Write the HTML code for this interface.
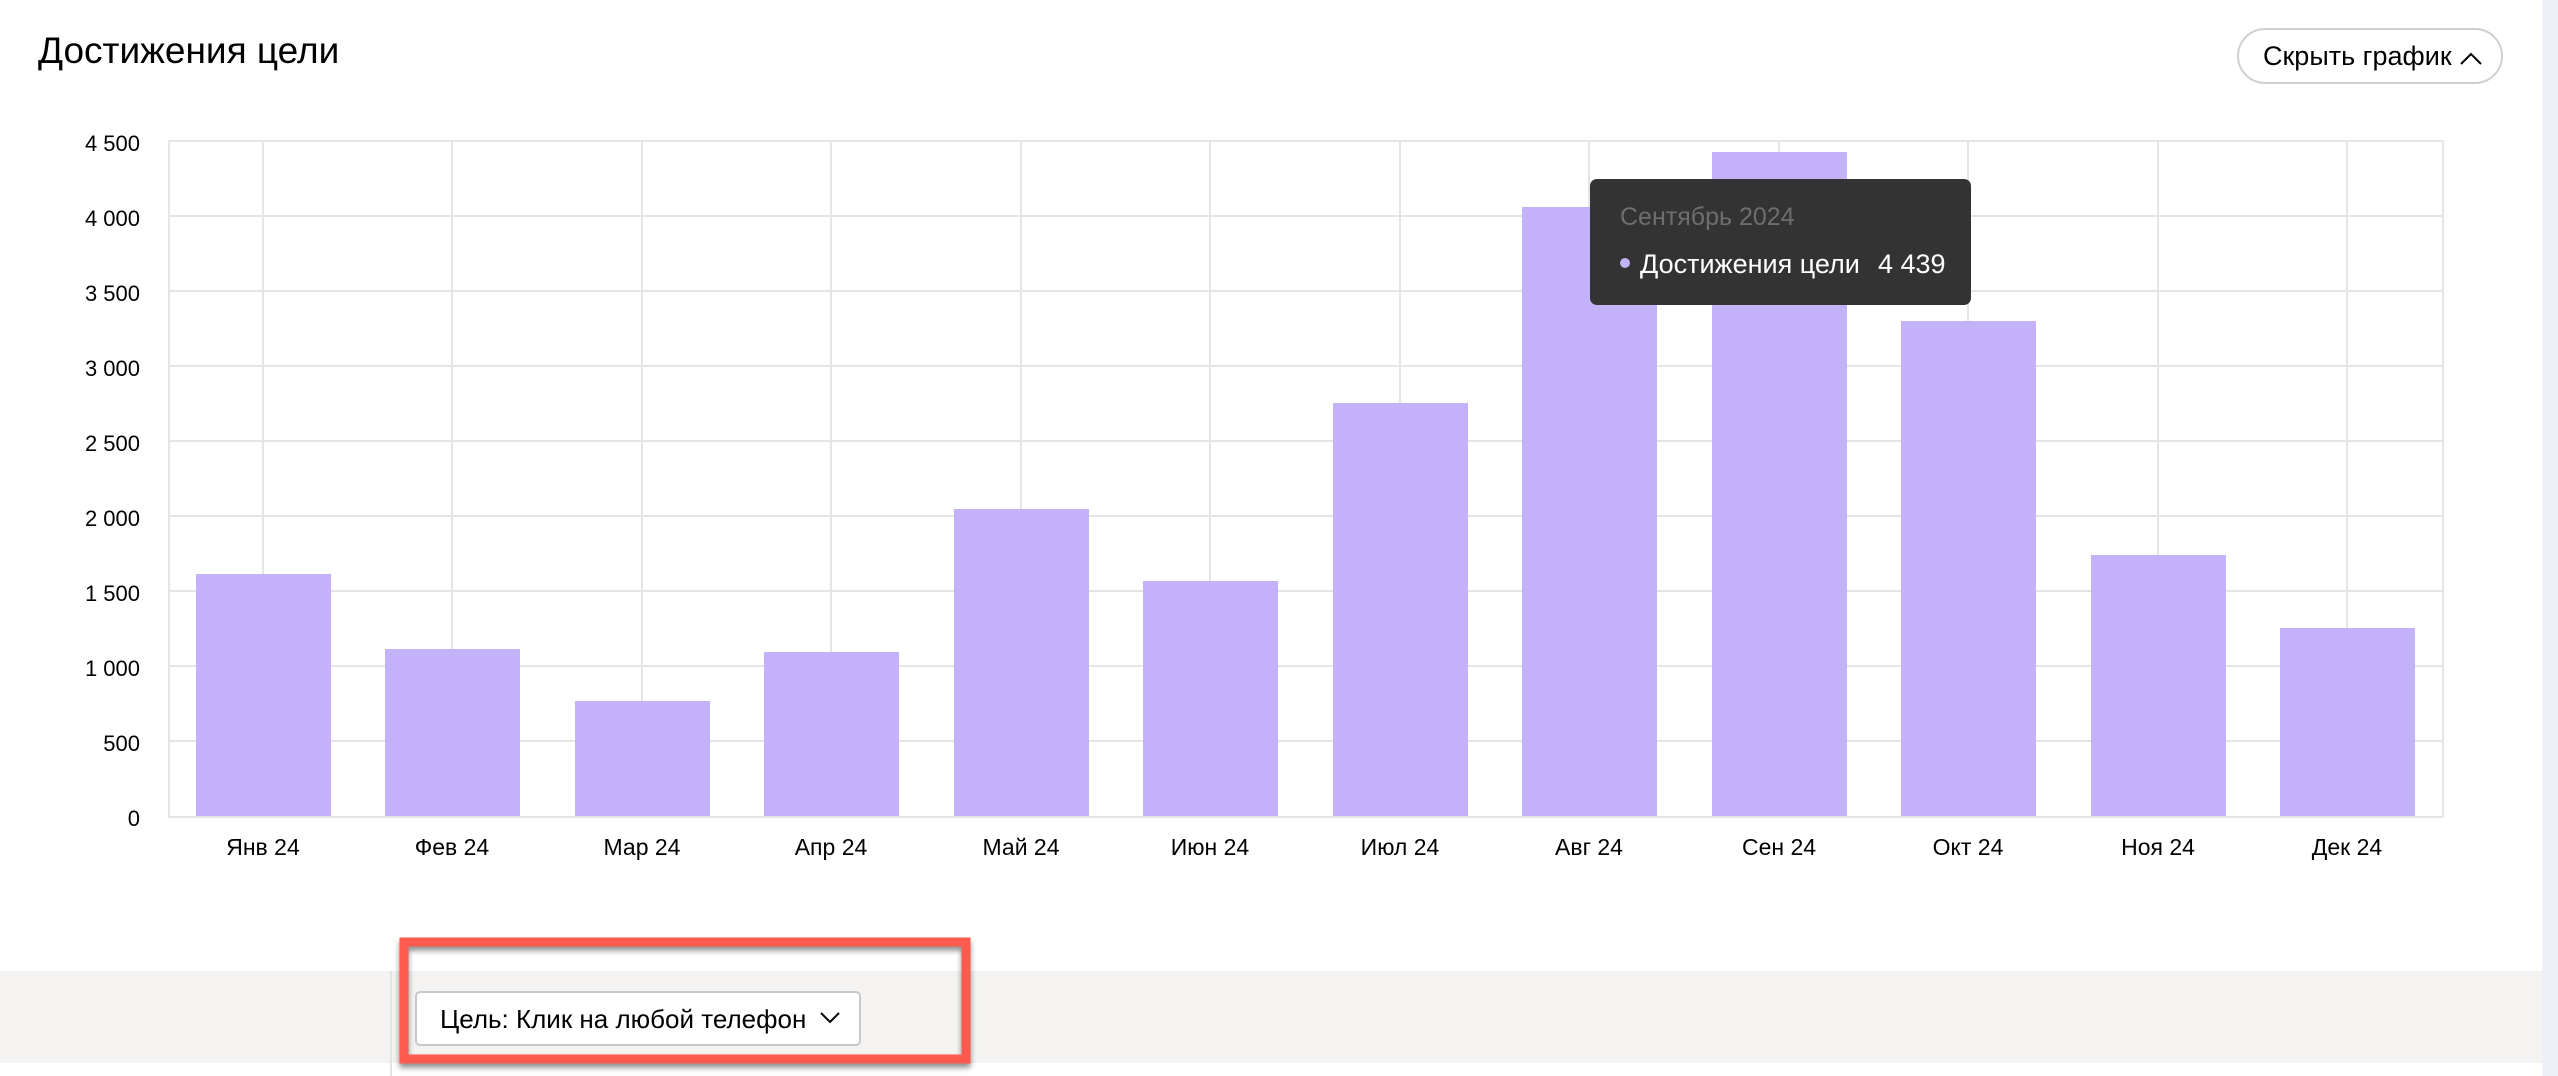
<!DOCTYPE html>
<html><head><meta charset="utf-8"><style>
html,body{margin:0;padding:0;width:2558px;height:1076px;overflow:hidden;background:#fff;font-family:"Liberation Sans",Arial,sans-serif}
</style></head><body>
<svg width="2558" height="1076" xmlns="http://www.w3.org/2000/svg" style="position:absolute;left:0;top:0">
<rect x="2542" y="0" width="16" height="1076" fill="#eef0f6"/>
<text x="38" y="63" font-size="37" fill="#000" font-family="Liberation Sans, sans-serif">Достижения цели</text>
<rect x="2238" y="29" width="264" height="54" rx="27" fill="#fff" stroke="#cfcfcf" stroke-width="2"/>
<text x="2263" y="65" font-size="27" fill="#000">Скрыть график</text>
<path d="M2461 64 L2471 54 L2481 64" fill="none" stroke="#000" stroke-width="2"/>
<g stroke="#e5e5e5" stroke-width="2">
<line x1="168" y1="141" x2="2443" y2="141"/><line x1="168" y1="216" x2="2443" y2="216"/><line x1="168" y1="291" x2="2443" y2="291"/><line x1="168" y1="366" x2="2443" y2="366"/><line x1="168" y1="441" x2="2443" y2="441"/><line x1="168" y1="516" x2="2443" y2="516"/><line x1="168" y1="591" x2="2443" y2="591"/><line x1="168" y1="666" x2="2443" y2="666"/><line x1="168" y1="741" x2="2443" y2="741"/><line x1="168" y1="817" x2="2443" y2="817"/>
<line x1="169" y1="141" x2="169" y2="817"/><line x1="2443" y1="141" x2="2443" y2="817"/>
<line x1="263" y1="141" x2="263" y2="817"/><line x1="452" y1="141" x2="452" y2="817"/><line x1="642" y1="141" x2="642" y2="817"/><line x1="831" y1="141" x2="831" y2="817"/><line x1="1021" y1="141" x2="1021" y2="817"/><line x1="1210" y1="141" x2="1210" y2="817"/><line x1="1400" y1="141" x2="1400" y2="817"/><line x1="1589" y1="141" x2="1589" y2="817"/><line x1="1779" y1="141" x2="1779" y2="817"/><line x1="1968" y1="141" x2="1968" y2="817"/><line x1="2158" y1="141" x2="2158" y2="817"/><line x1="2347" y1="141" x2="2347" y2="817"/>
</g>
<g fill="#c3b1f9">
<rect x="196" y="574" width="135" height="242"/><rect x="385" y="649" width="135" height="167"/><rect x="575" y="701" width="135" height="115"/><rect x="764" y="652" width="135" height="164"/><rect x="954" y="509" width="135" height="307"/><rect x="1143" y="581" width="135" height="235"/><rect x="1333" y="403" width="135" height="413"/><rect x="1522" y="207" width="135" height="609"/><rect x="1712" y="152" width="135" height="664"/><rect x="1901" y="321" width="135" height="495"/><rect x="2091" y="555" width="135" height="261"/><rect x="2280" y="628" width="135" height="188"/>
</g>
<g font-size="22" fill="#000" text-anchor="end">
<text x="140" y="151">4 500</text><text x="140" y="226">4 000</text><text x="140" y="301">3 500</text><text x="140" y="376">3 000</text><text x="140" y="451">2 500</text><text x="140" y="526">2 000</text><text x="140" y="601">1 500</text><text x="140" y="676">1 000</text><text x="140" y="751">500</text><text x="140" y="826">0</text>
</g>
<g font-size="23" fill="#000" text-anchor="middle">
<text x="263" y="855">Янв 24</text><text x="452" y="855">Фев 24</text><text x="642" y="855">Мар 24</text><text x="831" y="855">Апр 24</text><text x="1021" y="855">Май 24</text><text x="1210" y="855">Июн 24</text><text x="1400" y="855">Июл 24</text><text x="1589" y="855">Авг 24</text><text x="1779" y="855">Сен 24</text><text x="1968" y="855">Окт 24</text><text x="2158" y="855">Ноя 24</text><text x="2347" y="855">Дек 24</text>
</g>
<rect x="1590" y="179" width="381" height="126" rx="7" fill="#333"/>
<text x="1620" y="225" font-size="25" fill="#6e6e6e">Сентябрь 2024</text>
<circle cx="1625" cy="263" r="5" fill="#c3b1f9"/>
<text x="1640" y="273" font-size="27" fill="#fff">Достижения цели</text>
<text x="1878" y="273" font-size="27" fill="#fff">4 439</text>
<rect x="0" y="971" width="2542" height="92" fill="#f4f3f1"/>
<line x1="391" y1="971" x2="391" y2="1076" stroke="#e4e4e4" stroke-width="2"/>
<rect x="416" y="992" width="444" height="53" rx="4" fill="#fff" stroke="#c8c8c8" stroke-width="2"/>
<text x="440" y="1028" font-size="26" fill="#000">Цель: Клик на любой телефон</text>
<path d="M821 1013 L830 1022 L839 1013" fill="none" stroke="#000" stroke-width="2"/>
<rect x="404" y="942" width="562" height="117" fill="none" stroke="#ff5a4e" stroke-width="9" style="filter:drop-shadow(0 4px 3px rgba(0,0,0,0.45))"/>
</svg>
</body></html>
